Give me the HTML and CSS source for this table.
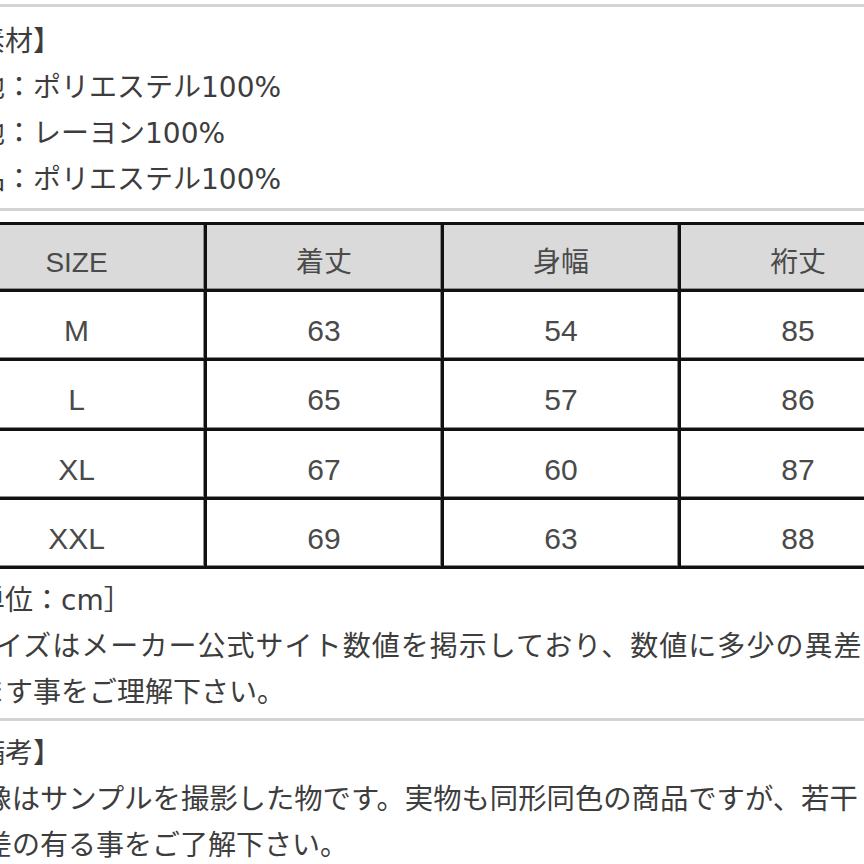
FILE: index.html
```html
<!DOCTYPE html>
<html lang="ja">
<head>
<meta charset="utf-8">
<title>商品詳細</title>
<link rel="stylesheet" href="styles.css">
</head>
<body>
<main class="page">
  <div class="rule rule-top"></div>
  <section class="block materials">
    <p class="line">【素材】</p>
    <p class="line">表地：ポリエステル100%</p>
    <p class="line">裏地：レーヨン100%</p>
    <p class="line">部品：ポリエステル100%</p>
  </section>
  <div class="rule rule-mid"></div>
  <table class="size-table">
    <colgroup>
      <col class="col-size">
      <col class="col-val">
      <col class="col-val">
      <col class="col-val">
    </colgroup>
    <thead>
      <tr><th>SIZE</th><th>着丈</th><th>身幅</th><th>裄丈</th></tr>
    </thead>
    <tbody>
      <tr><td>M</td><td>63</td><td>54</td><td>85</td></tr>
      <tr><td>L</td><td>65</td><td>57</td><td>86</td></tr>
      <tr><td>XL</td><td>67</td><td>60</td><td>87</td></tr>
      <tr><td>XXL</td><td>69</td><td>63</td><td>88</td></tr>
    </tbody>
  </table>
  <section class="block notes">
    <p class="line">［単位：cm］</p>
    <p class="line wide-line">※サイズはメーカー公式サイト数値を掲示しており、数値に多少の異差</p>
    <p class="line wrap-tail">が出ます事をご理解下さい。</p>
  </section>
  <div class="rule rule-bottom"></div>
  <section class="block remarks">
    <p class="line">【備考】</p>
    <p class="line remark-wide">画像はサンプルを撮影した物です。実物も同形同色の商品ですが、若干</p>
    <p class="line remark-tail">色差の有る事をご了解下さい。</p>
  </section>
</main>
</body>
</html>
```

FILE: styles.css
```css
html, body {
  margin: 0;
  padding: 0;
  background: #ffffff;
}

body {
  width: 864px;
  height: 864px;
  overflow: hidden;
  font-family: "DejaVu Sans", "Noto Sans CJK JP", "Noto Sans", sans-serif;
  color: #3d3d3d;
}

.page {
  padding-top: 4px;
}

.rule {
  height: 3px;
  background: #d3d3d3;
}

.block {
  margin-left: -51px;
  font-size: 28px;
  line-height: 46px;
  white-space: nowrap;
}

.line {
  margin: 0;
}

.materials {
  margin-top: 12px;
}

.rule-mid {
  margin-top: 5px;
}

.size-table {
  margin-top: 11px;
  margin-left: -54px;
  width: 972px;
  table-layout: fixed;
  border-collapse: separate;
  border-spacing: 0;
  border-top: 3px solid #111111;
  border-left: 3px solid #111111;
  font-family: "Liberation Sans", "Noto Sans CJK JP", sans-serif;
  font-size: 30px;
  color: #4a4a4a;
}

.col-size {
  width: 258px;
}

.col-val {
  width: 237px;
}

.size-table th,
.size-table td {
  box-sizing: border-box;
  padding: 12px 0 0;
  border-right: 3px solid #111111;
  border-bottom: 3px solid #111111;
  box-shadow: inset -1px -1px 0 #8c8c8c;
  text-align: center;
  vertical-align: middle;
  font-weight: normal;
  line-height: 30px;
}

.size-table th {
  background: #dadada;
  font-size: 28px;
}

.size-table thead tr {
  height: 67px;
}

.size-table tbody tr {
  height: 69.25px;
}

.notes {
  margin-top: 9px;
}

.wide-line {
  width: 920px;
  margin-left: -7.5px;
  white-space: normal;
  text-align: justify;
  text-align-last: justify;
  text-justify: inter-character;
}

.wrap-tail {
  margin-left: -28px;
}

.rule-bottom {
  margin-top: 2px;
}

.remarks {
  margin-top: 10px;
}

.remark-wide {
  margin-left: 6px;
  font-size: 28.35px;
}

.remark-tail {
  margin-left: 7px;
}
```
